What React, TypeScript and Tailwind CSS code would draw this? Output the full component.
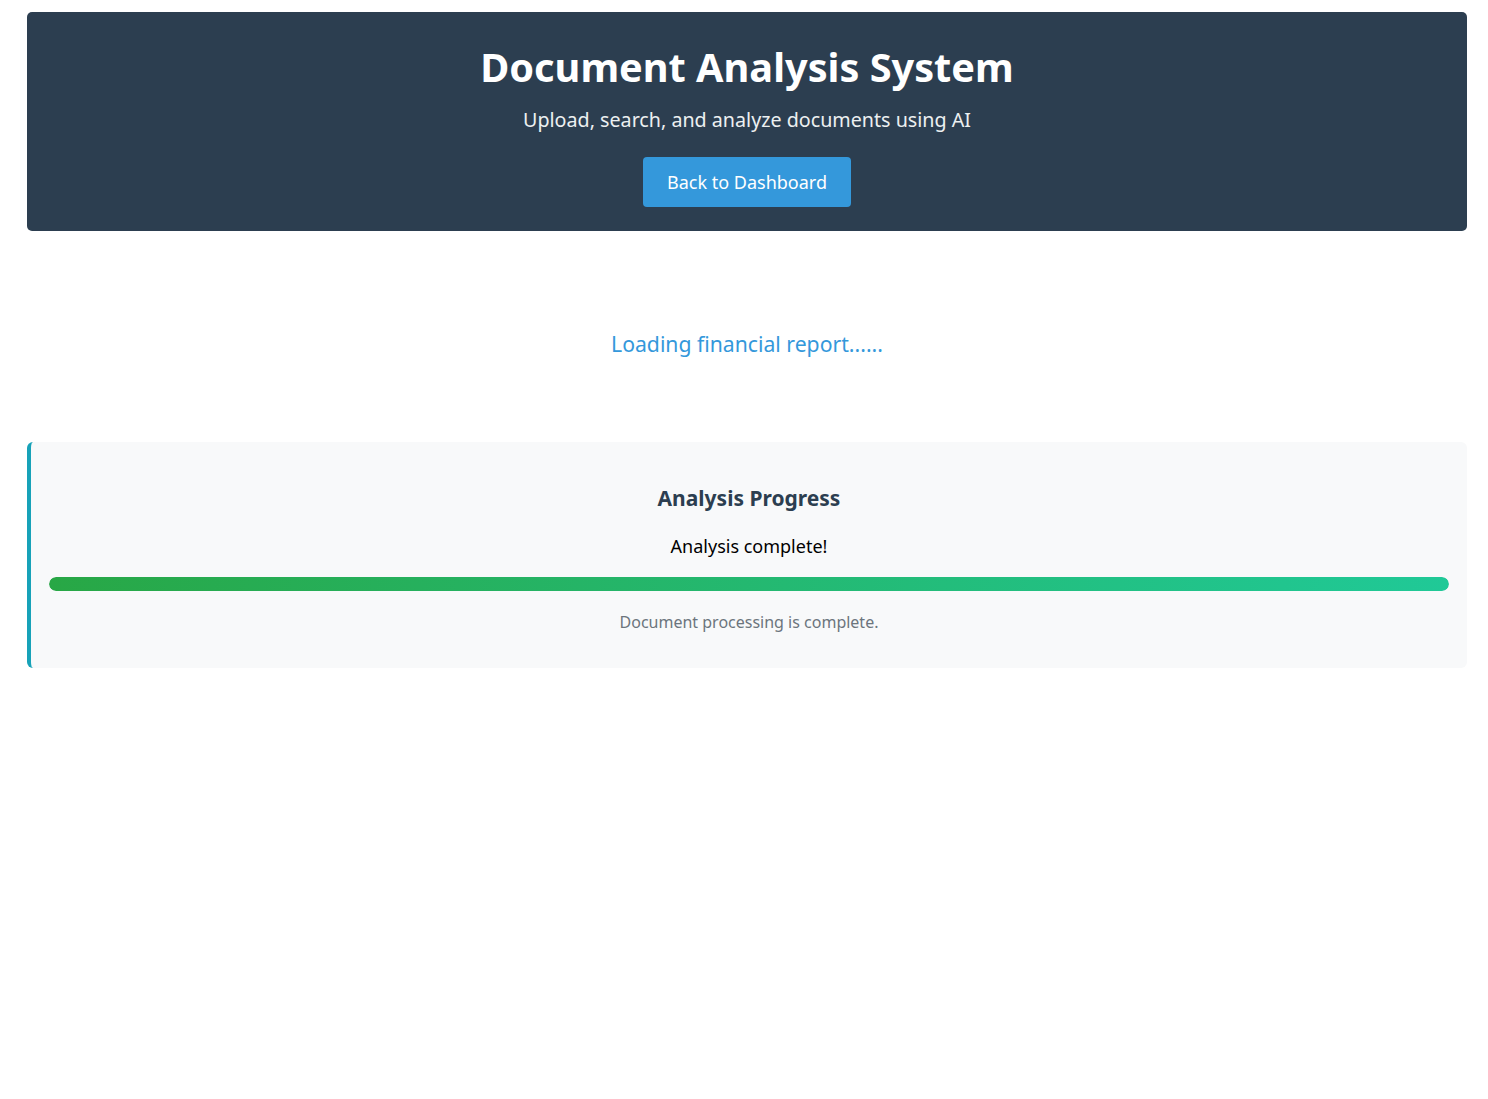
const font = { fontFamily: '"Noto Sans", "Open Sans", sans-serif' };

const Header = () => (
  <div className="flex flex-col items-center rounded-[5px] bg-[#2c3e50] pt-[31px] pb-[24px] text-white">
    <h1 className="text-[39.7px] leading-[48px] font-bold">Document Analysis System</h1>
    <p className="mt-[15px] text-[19.7px] leading-[28px] text-[#ecf0f1]">
      Upload, search, and analyze documents using AI
    </p>
    <button className="mt-[23px] h-[50px] w-[208px] rounded-[4px] bg-[#3498db] text-[18px] text-white">
      Back to Dashboard
    </button>
  </div>
);

const ProgressPanel = ({ percent }: { percent: number }) => (
  <div className="flex flex-col items-center rounded-[6px] border-l-4 border-[#17a2b8] bg-[#f8f9fa] px-[18px] pt-[41px] pb-[34px]">
    <h3 className="text-[21px] leading-[30px] font-bold text-[#2c3e50]">Analysis Progress</h3>
    <p className="mt-[20px] text-[18px] leading-[26px] text-black">Analysis complete!</p>
    <div className="mt-[18px] h-[14px] w-full overflow-hidden rounded-full bg-[#e9ecef]">
      <div
        className="h-full rounded-full bg-gradient-to-r from-[#28a745] to-[#20c997]"
        style={{ width: `${percent}%` }}
      />
    </div>
    <p className="mt-[19px] text-[16px] leading-[24px] text-[#6c757d]">
      Document processing is complete.
    </p>
  </div>
);

export default function App() {
  return (
    <div className="min-h-screen bg-white pt-3 pl-[27px] pr-[21px]" style={font}>
      <Header />
      <div className="mt-[98px] text-center text-[21.2px] leading-[30px] text-[#3498db]">
        Loading financial report......
      </div>
      <div className="mt-[83px]">
        <ProgressPanel percent={100} />
      </div>
    </div>
  );
}
